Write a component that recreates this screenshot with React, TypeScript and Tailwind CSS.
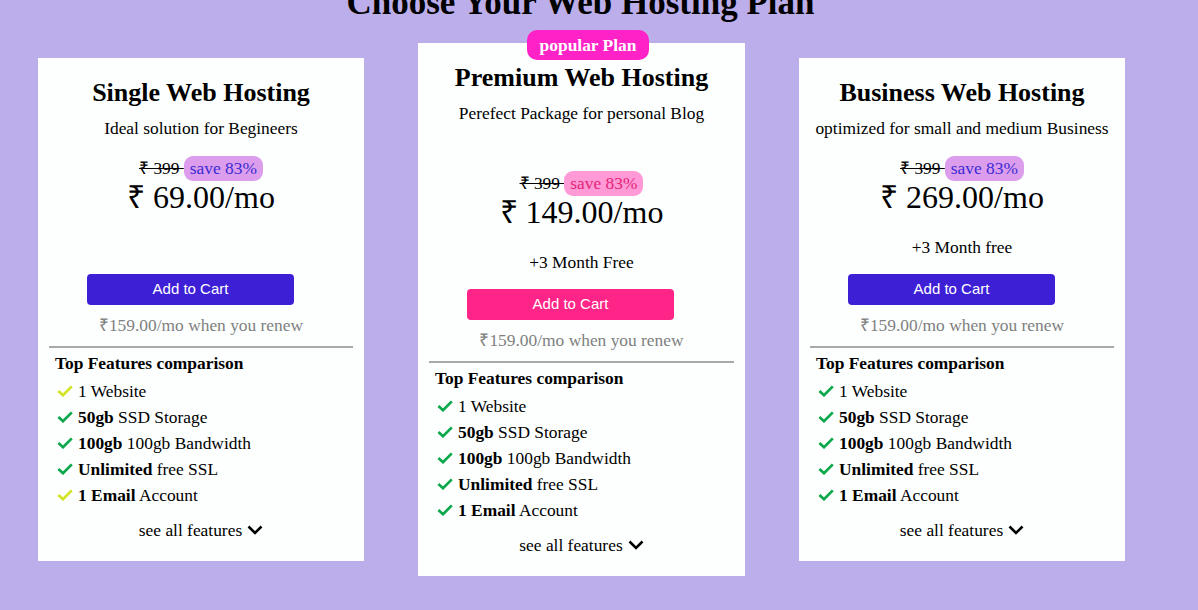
import React from 'react';

type Plan = {
  name: string;
  desc: string;
  price: string;
  free: string;
  popular?: boolean;
  hideFree?: boolean;
  checks: string[];
};

const GREEN = 'text-[#0aa84a]';
const LIME = 'text-[#d2e324]';

const PLANS: Plan[] = [
  {
    name: 'Single Web Hosting',
    desc: 'Ideal solution for Begineers',
    price: '₹ 69.00/mo',
    free: '+3 Month free',
    hideFree: true,
    checks: [LIME, GREEN, GREEN, GREEN, LIME],
  },
  {
    name: 'Premium Web Hosting',
    desc: 'Perefect Package for personal Blog',
    price: '₹ 149.00/mo',
    free: '+3 Month Free',
    popular: true,
    checks: [GREEN, GREEN, GREEN, GREEN, GREEN],
  },
  {
    name: 'Business Web Hosting',
    desc: 'optimized for small and medium Business',
    price: '₹ 269.00/mo',
    free: '+3 Month free',
    checks: [GREEN, GREEN, GREEN, GREEN, GREEN],
  },
];

const FEATURES: [string, string][] = [
  ['', '1 Website'],
  ['50gb', ' SSD Storage'],
  ['100gb', ' 100gb Bandwidth'],
  ['Unlimited', ' free SSL'],
  ['1 Email', ' Account'],
];

function Check({ className }: { className: string }) {
  return (
    <svg viewBox="0 0 16 12" className={`w-[16px] h-[12px] shrink-0 ${className}`} fill="none">
      <path d="M1.4 6 L6 10.2 L14.8 1.4" stroke="currentColor" strokeWidth="2.7" />
    </svg>
  );
}

function Chevron() {
  return (
    <svg viewBox="0 0 16 10" className="w-[16px] h-[10px] ml-[5px]" fill="none">
      <path d="M1.5 1.5 L8 8 L14.5 1.5" stroke="#000" strokeWidth="2.5" />
    </svg>
  );
}

function PlanCard({ plan }: { plan: Plan }) {
  return (
    <div
      className={`relative bg-[#fcfffe] text-black shrink-0 pt-[20px] pb-[21px] text-[17.4px] ${
        plan.popular ? 'w-[327px]' : 'w-[326px]'
      }`}
    >
      {plan.popular && (
        <div className="absolute left-[109px] top-[-13px] w-[122px] h-[30px] rounded-[10px] bg-[#ff22c6] text-white font-bold leading-[30px] text-center">
          popular Plan
        </div>
      )}
      <h2 className="text-center font-bold text-[26px] leading-[30px]">{plan.name}</h2>
      <p className="text-center leading-[20px] mt-[10px]">{plan.desc}</p>

      {/* price block */}
      <div
        className={`flex items-center justify-center h-[22px] ${plan.popular ? 'mt-[49px]' : 'mt-[19px]'}`}
      >
        <span className="line-through whitespace-pre">₹ 399 </span>
        <span
          className={`px-[6px] leading-[25px] rounded-[9px] ${
            plan.popular ? 'bg-[#ff9ad6] text-[#e52478]' : 'bg-[#dc9dec] text-[#3b2bd4]'
          }`}
        >
          save 83%
        </span>
      </div>
      <div className="text-center text-[32px] leading-[36px]">{plan.price}</div>
      <p
        className={`text-center leading-[20px] mt-[22px] ${
          plan.hideFree ? 'text-[#fcfffe]' : 'text-black'
        }`}
      >
        {plan.free}
      </p>

      <button
        className={`block ml-[49px] mt-[17px] w-[207px] h-[31px] rounded-[4px] text-white text-[15px] font-['Liberation_Sans',Arial,sans-serif] ${
          plan.popular ? 'bg-[#ff2487]' : 'bg-[#3d1fd6]'
        }`}
      >
        Add to Cart
      </button>
      <p className="text-center leading-[20px] mt-[10px] text-[#808080]">₹159.00/mo when you renew</p>

      <div className="mx-[11px] mt-[11px] h-[2px] bg-[#a9a9a9]" />

      <h3 className="pl-[17px] mt-[5px] font-bold leading-[20px]">Top Features comparison</h3>
      <ul className="mt-[5px] pl-[19px]">
        {FEATURES.map(([bold, rest], i) => (
          <li key={i} className="flex items-center h-[26px]">
            <Check className={plan.checks[i]} />
            <span className="ml-[5px] whitespace-pre">
              {bold && <b>{bold}</b>}
              {rest}
            </span>
          </li>
        ))}
      </ul>
      <div className="flex items-center justify-center mt-[12px] leading-[20px]">
        see all features
        <Chevron />
      </div>
    </div>
  );
}

export default function App() {
  return (
    <div className="w-[1198px] h-[610px] overflow-hidden bg-[#bcaeeb] font-['Liberation_Serif','Times_New_Roman',serif]">
      <h1 className="text-center font-bold text-[35px] leading-[37px] -mt-[16px] pr-[37px]">
        Choose Your Web Hosting Plan
      </h1>
      <div className="flex items-center gap-[54px] pl-[38px] mt-[22px]">
        {PLANS.map((p) => (
          <PlanCard key={p.name} plan={p} />
        ))}
      </div>
    </div>
  );
}
